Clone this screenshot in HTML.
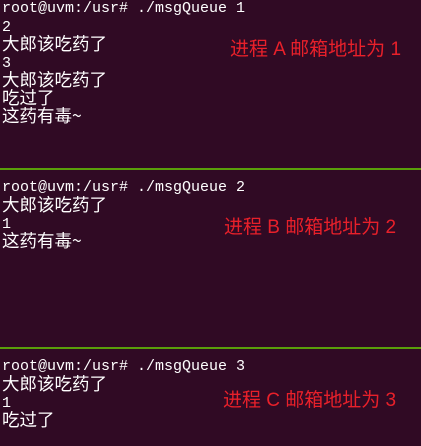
<!DOCTYPE html>
<html><head><meta charset="utf-8"><style>
html,body{margin:0;padding:0;}
body{width:421px;height:446px;background:#300a24;position:relative;overflow:hidden;}
.t{position:absolute;left:2px;color:#fff;font-family:"Liberation Mono",monospace;font-size:15px;}
.t div{height:18px;line-height:18px;white-space:pre;overflow:visible;}
.t .c{font-family:"Noto Sans CJK SC",sans-serif;font-size:17.5px;line-height:18px;position:relative;top:-1px;}
.t .n{position:relative;top:1px;}
.g{position:absolute;left:0;width:421px;height:2px;background:#5a9e0a;}
.r{position:absolute;color:#e8202a;font-family:"Liberation Sans","Noto Sans CJK SC",sans-serif;font-size:19px;line-height:20px;white-space:pre;}
</style></head><body>
<div class="t" style="top:0">
<div>root@uvm:/usr# ./msgQueue 1</div>
<div class="n">2</div>
<div class="c">大郎该吃药了</div>
<div class="n">3</div>
<div class="c">大郎该吃药了</div>
<div class="c">吃过了</div>
<div class="c">这药有毒~</div></div>
<div class="r" style="left:230px;top:40px">进程 A 邮箱地址为 1</div>
<div class="g" style="top:168px"></div>
<div class="t" style="top:179px">
<div>root@uvm:/usr# ./msgQueue 2</div>
<div class="c">大郎该吃药了</div>
<div class="n">1</div>
<div class="c">这药有毒~</div></div>
<div class="r" style="left:224px;top:218px">进程 B 邮箱地址为 2</div>
<div class="g" style="top:347px"></div>
<div class="t" style="top:358px">
<div>root@uvm:/usr# ./msgQueue 3</div>
<div class="c">大郎该吃药了</div>
<div class="n">1</div>
<div class="c">吃过了</div></div>
<div class="r" style="left:223px;top:391px">进程 C 邮箱地址为 3</div>
</body></html>
